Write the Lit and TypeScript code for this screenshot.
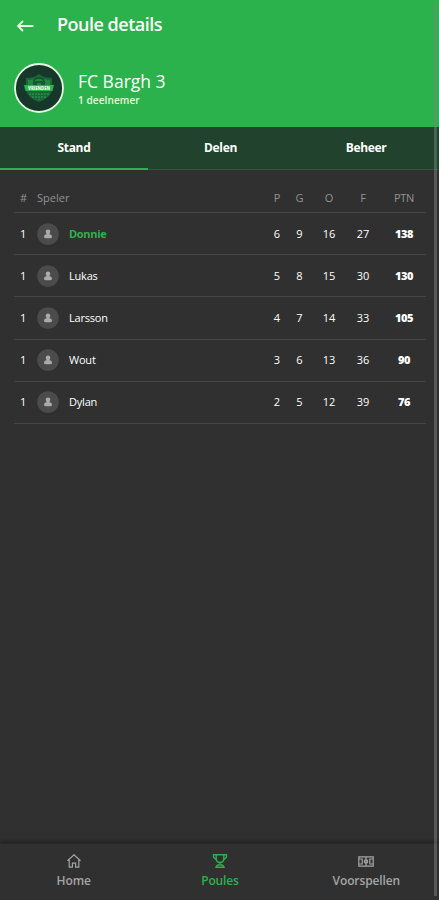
import { LitElement, html, css, svg } from "lit";
import { customElement } from "lit/decorators.js";
import { classMap } from "lit/directives/class-map.js";

interface Player {
  name: string;
  p: number;
  g: number;
  o: number;
  f: number;
  points: number;
  me?: boolean;
}

const players: Player[] = [
  { name: "Donnie", p: 6, g: 9, o: 16, f: 27, points: 138, me: true },
  { name: "Lukas", p: 5, g: 8, o: 15, f: 30, points: 130 },
  { name: "Larsson", p: 4, g: 7, o: 14, f: 33, points: 105 },
  { name: "Wout", p: 3, g: 6, o: 13, f: 36, points: 90 },
  { name: "Dylan", p: 2, g: 5, o: 12, f: 39, points: 76 },
];

const homeIcon = svg`<path d="M1.5 7.8 8 1.8l6.500 6M3.200 7v7.200h3.200v-4h3.200v4h3.200V7"/>`;
const cupIcon = svg`<path d="M4.200 1.800h7.600v3.400c0 2.600-1.400 4.300-3.800 4.300s-3.800-1.700-3.800-4.300zM4.200 1.800H1.500v2.400l3.200 3M11.800 1.800h2.700v2.400l-3.200 3M8 9.500v2.300M4 14.200c.4-1.600 1.800-2.400 4-2.400s3.600.8 4 2.400z" stroke-width="1.400"/>`;
const pitchIcon = svg`<path d="M.8 3.800h14.400v9.400H.8zM8 3.800v9.400M.8 6h3.400v5H.8M15.200 6h-3.400v5h3.400M6.300 8.500a1.700 1.700 0 1 0 3.400 0a1.700 1.700 0 1 0-3.400 0"/>`;

@customElement("app-root")
export class AppRoot extends LitElement {
  static styles = css`
    :host {
      display: flex;
      flex-direction: column;
      position: relative;
      box-sizing: border-box;
      width: 100%;
      height: 900px;
      overflow: hidden;
      background: #303030;
      color: #fff;
      font-family: "Open Sans", "Noto Sans", sans-serif;
      font-size: 11px;
    }
    header {
      height: 127px;
      background: #2bb24c;
    }
    .bar {
      display: flex;
      align-items: center;
      height: 48px;
      padding-left: 16px;
      gap: 22px;
    }
    .back {
      width: 19px;
      height: 16px;
      margin-top: 3px;
      fill: none;
      stroke: #e9f8dc;
      stroke-width: 1.8;
    }
    h1 {
      margin: 0;
      font-size: 18px;
      line-height: 24px;
      font-weight: 650;
      letter-spacing: -0.5px;
    }
    .club {
      display: flex;
      align-items: center;
      padding: 15px 14px 0;
      gap: 14px;
    }
    .crest {
      width: 50px;
      height: 50px;
    }
    .crest text {
      font-size: 4.5px;
      font-weight: 800;
      fill: #e5fae9;
      text-anchor: middle;
    }
    .name {
      font-size: 17.5px;
      line-height: 20px;
      margin-top: 1px;
    }
    .count {
      font-size: 10px;
      line-height: 14px;
      margin-top: 2px;
      color: #e8fbd9;
      font-weight: 600;
      letter-spacing: 0.1px;
    }
    .tabs {
      display: grid;
      grid-template-columns: 148px 145px 146px;
      height: 43px;
      box-sizing: border-box;
      background: #21432d;
    }
    .tab {
      text-align: center;
      font-size: 12px;
      font-weight: 700;
      line-height: 41px;
      letter-spacing: -0.35px;
      box-sizing: border-box;
      border-bottom: 1px solid #3c4f40;
    }
    .tab.active {
      border-bottom: 2px solid #2bb24c;
    }
    .table {
      padding: 15px 13px 0 14px;
      flex: 1;
    }
    .row {
      display: grid;
      grid-template-columns: 23px 32px 1fr 22px 23px 36px 32px 47px;
      align-items: center;
      height: 42.2px;
      box-sizing: border-box;
      border-bottom: 1.5px solid #464646;
      text-align: center;
      line-height: 16px;
    }
    .row.head {
      height: 28px;
      color: #929292;
      padding-bottom: 2px;
    }
    .rank {
      text-align: left;
      padding-left: 6px;
    }
    .left {
      text-align: left;
    }
    .wide {
      grid-column: 2 / 4;
    }
    .avatar {
      display: block;
      width: 22px;
      height: 22px;
    }
    .player {
      text-align: left;
      font-weight: 500;
      letter-spacing: -0.2px;
    }
    .me {
      color: #2bb24c;
      font-weight: 700;
      letter-spacing: -0.3px;
    }
    .points {
      font-weight: 800;
      letter-spacing: -0.5px;
      padding-left: 3px;
    }
    .head .points {
      font-weight: 400;
      letter-spacing: -0.3px;
    }
    nav {
      display: grid;
      grid-template-columns: repeat(3, 1fr);
      height: 56px;
      border-top: 1px solid #292929;
      box-shadow: 0 -2px 3px rgba(0, 0, 0, 0.3);
    }
    .item {
      display: flex;
      flex-direction: column;
      align-items: center;
      padding: 9px 0 0 1px;
      gap: 4px;
      color: #a4a4a4;
      font-size: 12px;
      line-height: 16px;
      font-weight: 600;
      letter-spacing: -0.12px;
    }
    .item svg {
      width: 16px;
      height: 16px;
      fill: none;
      stroke: currentColor;
      stroke-width: 1.2;
    }
    .item.active {
      color: #2bb24c;
    }
    .scroll {
      position: absolute;
      top: 4px;
      right: 2px;
      width: 3px;
      height: 892px;
      background: rgba(128, 128, 128, 0.5);
    }
  `;

  private row(p: Player) {
    return html`<div class="row">
      <span class="rank">1</span>
      <svg class="avatar" viewBox="0 0 22 22">
        <circle cx="11" cy="11" r="10.800" fill="#4b4b4b" />
        <circle cx="11" cy="8.700" r="2.300" fill="#aaa" />
        <path d="M9.600 10h2.800v1.300c1.800.2 2.600 1.200 2.600 2.600 0 .9-.8 1.300-4 1.300s-4-.4-4-1.300c0-1.400.8-2.400 2.600-2.600z" fill="#aaa" />
      </svg>
      <span class=${classMap({ player: true, me: !!p.me })}>${p.name}</span>
      <span>${p.p}</span><span>${p.g}</span><span>${p.o}</span><span>${p.f}</span>
      <span class="points">${p.points}</span>
    </div>`;
  }

  render() {
    return html`
      <header>
        <div class="bar">
          <svg class="back" viewBox="0 0 19 16"><path d="M17.500 8H2M7 3 2 8l5 5" /></svg>
          <h1>Poule details</h1>
        </div>
        <div class="club">
          <svg class="crest" viewBox="0 0 50 50">
            <circle cx="25" cy="25" r="24" fill="#18372b" stroke="#e4f8e5" stroke-width="1.800" />
            <path d="M12 15c5 0 9-1 13-4 4 3 8 4 13 4v10c0 7-5 11-13 14-8-3-13-7-13-14z" fill="#1b6638" />
            <path d="M14 17c4 0 8-1 11-3 3 2 7 3 11 3v5H14z" fill="#23863f" />
            <path d="M20 22v-3a5 4 0 0 1 10 0v3M22 22v-3h6v3" fill="none" stroke="#174b2d" stroke-width="1.500" />
            <path d="M16 30v3M19 30v5M22 30v6M25 30v7M28 30v6M31 30v5M34 30v3" stroke="#2b9a4b" stroke-width="1.200" stroke-dasharray="2 1" />
            <path d="M10 22h30l-1.500 6h-27z" fill="#2bb24c" />
            <text x="25" y="26.700" textLength="22" lengthAdjust="spacingAndGlyphs">VRIENDEN</text>
          </svg>
          <div>
            <div class="name">FC Bargh 3</div>
            <div class="count">1 deelnemer</div>
          </div>
        </div>
      </header>
      <div class="tabs">
        <div class="tab active">Stand</div>
        <div class="tab">Delen</div>
        <div class="tab">Beheer</div>
      </div>
      <div class="table">
        <div class="row head">
          <span class="rank">#</span><span class="left wide">Speler</span>
          <span>P</span><span>G</span><span>O</span><span>F</span><span class="points">PTN</span>
        </div>
        ${players.map((p) => this.row(p))}
      </div>
      <nav>
        <div class="item"><svg viewBox="0 0 16 16">${homeIcon}</svg>Home</div>
        <div class="item active"><svg viewBox="0 0 16 16">${cupIcon}</svg>Poules</div>
        <div class="item"><svg viewBox="0 0 16 16">${pitchIcon}</svg>Voorspellen</div>
      </nav>
      <div class="scroll"></div>
    `;
  }
}
